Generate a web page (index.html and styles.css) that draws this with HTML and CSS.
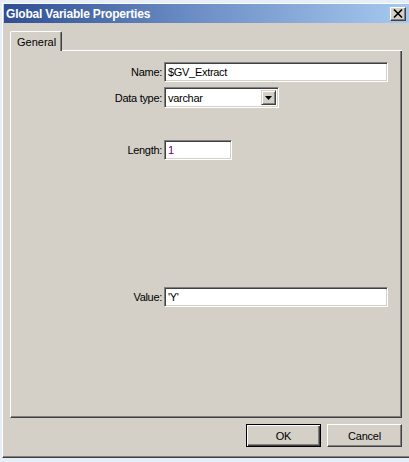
FILE: index.html
```html
<!DOCTYPE html>
<html lang="en">
<head>
    <meta charset="UTF-8">
    <title>Global Variable Properties</title>
    <link rel="stylesheet" href="styles.css">
</head>
<body>
    <div class="window">
        <div class="titlebar">
            <span class="title">Global Variable Properties</span>
            <span class="close">
                <svg width="10" height="9" viewBox="0 0 10 9">
                    <path d="M1 0.5 L9 8.5 M9 0.5 L1 8.5" stroke="#000" stroke-width="1.6"/>
                </svg>
            </span>
        </div>

        <div class="client">
            <div class="tabs">
                <div class="tab">General</div>
                <div class="tab-rest"></div>
            </div>

            <div class="panel">
                <div class="row row-name">
                    <span class="label">Name:</span>
                    <div class="edit edit-wide">$GV_Extract</div>
                </div>
                <div class="row row-type">
                    <span class="label">Data type:</span>
                    <div class="combo">
                        <span class="combo-text">varchar</span>
                        <span class="combo-btn">
                            <svg width="7" height="4" viewBox="0 0 7 4"><path d="M0 0 H7 L3.5 4 Z" fill="#000"/></svg>
                        </span>
                    </div>
                </div>
                <div class="row row-length">
                    <span class="label">Length:</span>
                    <div class="edit edit-short"><span class="num">1</span></div>
                </div>
                <div class="row row-value">
                    <span class="label">Value:</span>
                    <div class="edit edit-wide">'Y'</div>
                </div>
            </div>

            <div class="buttons">
                <button class="btn btn-default">OK</button>
                <button class="btn">Cancel</button>
            </div>
        </div>
    </div>
</body>
</html>
```

FILE: styles.css
```css
body {
    margin: 0;
    padding: 0;
    background-color: #e6eef8;
    font-family: "Liberation Sans", Arial, sans-serif;
    font-size: 11px;
    color: #000;
    overflow: hidden;
    width: 409px;
    height: 462px;
}

.window {
    margin: 3px 0 0 2px;
    width: 410px;
    height: 455px;
    background-color: #d4d0c8;
    border-top: 1px solid #ffffff;
    border-left: 1px solid #ffffff;
    border-bottom: 1px solid #404040;
    box-shadow: inset 0 -1px 0 #808080;
    padding-left: 1px;
    box-sizing: border-box;
    display: flex;
    flex-direction: column;
}

.titlebar {
    height: 19px;
    margin-left: 0;
    background: linear-gradient(to right, #2f4f93 0%, #6a8cc4 45%, #a6caf0 100%);
    display: flex;
    align-items: center;
    justify-content: space-between;
    padding: 0 4px 0 2px;
}

.title {
    color: #ffffff;
    font-weight: bold;
    font-size: 12px;
    letter-spacing: -0.2px;
}

.close {
    width: 16px;
    height: 14px;
    box-sizing: border-box;
    background-color: #d4d0c8;
    border-top: 1px solid #ffffff;
    border-left: 1px solid #ffffff;
    border-right: 1px solid #404040;
    border-bottom: 1px solid #404040;
    box-shadow: inset -1px -1px 0 #808080;
    display: flex;
    align-items: center;
    justify-content: center;
    margin-right: 2px;
}

.client {
    padding: 8px 0 0 6px;
    width: 392px;
}

.tabs {
    display: flex;
    align-items: flex-end;
    height: 20px;
}

.tab {
    width: 52px;
    height: 20px;
    box-sizing: border-box;
    border-top: 1px solid #ffffff;
    border-left: 1px solid #ffffff;
    border-right: 1px solid #404040;
    box-shadow: inset -1px 0 0 #808080;
    border-top-left-radius: 2px;
    border-top-right-radius: 2px;
    padding: 4px 0 0 6px;
}

.tab-rest {
    flex: 1;
    border-bottom: 1px solid #ffffff;
}

.panel {
    height: 367px;
    box-sizing: border-box;
    border-left: 1px solid #ffffff;
    border-right: 1px solid #404040;
    border-bottom: 1px solid #404040;
    box-shadow: inset -1px -1px 0 #808080;
    display: flex;
    flex-direction: column;
}

.row {
    display: flex;
    align-items: center;
}

.label {
    width: 151px;
    text-align: right;
    margin-right: 2px;
    letter-spacing: -0.3px;
}

.row-name { margin-top: 11px; }
.row-type { margin-top: 5px; }
.row-length { margin-top: 32px; }
.row-value { margin-top: 127px; }

.edit {
    height: 20px;
    box-sizing: border-box;
    background-color: #ffffff;
    border-top: 1px solid #808080;
    border-left: 1px solid #808080;
    border-right: 1px solid #ffffff;
    border-bottom: 1px solid #ffffff;
    box-shadow: inset 1px 1px 0 #404040, inset -1px -1px 0 #d4d0c8;
    padding: 0 3px;
    line-height: 18px;
    letter-spacing: -0.3px;
}

.edit-wide { width: 224px; }
.edit-short { width: 68px; }

.num { color: #6a006a; }

.combo {
    width: 115px;
    height: 21px;
    box-sizing: border-box;
    background-color: #ffffff;
    border-top: 1px solid #808080;
    border-left: 1px solid #808080;
    border-right: 1px solid #ffffff;
    border-bottom: 1px solid #ffffff;
    box-shadow: inset 1px 1px 0 #404040, inset -1px -1px 0 #d4d0c8;
    display: flex;
    align-items: center;
    justify-content: space-between;
    padding: 2px 2px 2px 3px;
}

.combo-text { letter-spacing: -0.3px; }

.combo-btn {
    width: 15px;
    height: 15px;
    box-sizing: border-box;
    background-color: #d4d0c8;
    border-top: 1px solid #d4d0c8;
    border-left: 1px solid #d4d0c8;
    border-right: 1px solid #404040;
    border-bottom: 1px solid #404040;
    box-shadow: inset 1px 1px 0 #ffffff, inset -1px -1px 0 #808080;
    display: flex;
    align-items: center;
    justify-content: center;
}

.buttons {
    display: flex;
    justify-content: flex-end;
    gap: 6px;
    margin-top: 6px;
}

.btn {
    width: 75px;
    height: 23px;
    box-sizing: border-box;
    background-color: #d4d0c8;
    font-family: "Liberation Sans", Arial, sans-serif;
    font-size: 11px;
    color: #000;
    border-top: 1px solid #ffffff;
    border-left: 1px solid #ffffff;
    border-right: 1px solid #404040;
    border-bottom: 1px solid #404040;
    box-shadow: inset -1px -1px 0 #808080;
    padding: 0;
    letter-spacing: -0.2px;
}

.btn-default {
    border: 1px solid #000000;
    box-shadow: inset 1px 1px 0 #ffffff, inset -1px -1px 0 #404040, inset -2px -2px 0 #808080;
}
```
